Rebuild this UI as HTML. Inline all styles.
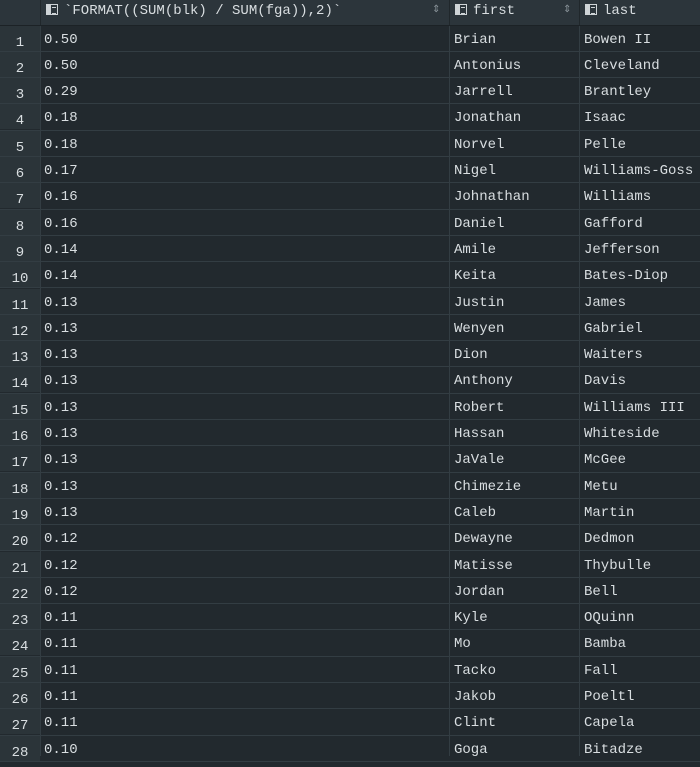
<!DOCTYPE html><html><head><style>
body{margin:0;width:700px;height:756px;overflow:hidden;background:#22292e;font-family:"Liberation Mono",monospace;font-size:14px;color:#d9dee1}
.h{position:absolute;top:0;left:0;width:700px;height:25px;background:#2c353b;border-bottom:1px solid #1c2226}
.h div{position:absolute;top:0;height:25px;line-height:22px;border-left:1px solid #20272b}
.ic{display:inline-block;width:12px;height:11px;vertical-align:-1px;margin-right:6px;background:linear-gradient(90deg,#cfd4d7 0 4px,transparent 4px);border:1px solid #cfd4d7;box-sizing:border-box;position:relative}
.ic:after{content:"";position:absolute;left:5px;right:1px;top:2px;height:5px;border-top:1px solid #cfd4d7;border-bottom:1px solid #cfd4d7}
.s{position:absolute;top:0;color:#8a949a;font-size:10px}
.r{position:absolute;left:0;width:700px;height:26.3px;border-bottom:1px solid #333d43;box-sizing:border-box;line-height:28px}
.r span{position:absolute;top:0}
.n{left:0;width:40px;height:25px;background:#2b3439;text-align:center;padding-top:3px;box-sizing:border-box}
.a{left:44px}.b{left:454px}.c{left:584px}
.v1,.v2,.v3{position:absolute;top:0;width:1px;height:756px;background:#333d43}
</style></head><body>
<div class="v1" style="left:40px"></div><div class="v2" style="left:449px"></div><div class="v3" style="left:579px"></div>
<div id="rows"></div>
<div class="h">
<div style="left:40px;width:409px;padding-left:5px;box-sizing:border-box"><span class="ic"></span>`FORMAT((SUM(blk) / SUM(fga)),2)`<span class="s" style="left:391px">⇕</span></div>
<div style="left:449px;width:130px;padding-left:5px;box-sizing:border-box"><span class="ic"></span>first<span class="s" style="left:113px">⇕</span></div>
<div style="left:579px;width:121px;padding-left:5px;box-sizing:border-box"><span class="ic"></span>last</div>
</div>
<script>
var d=[["0.50","Brian","Bowen II"],["0.50","Antonius","Cleveland"],["0.29","Jarrell","Brantley"],["0.18","Jonathan","Isaac"],["0.18","Norvel","Pelle"],["0.17","Nigel","Williams-Goss"],["0.16","Johnathan","Williams"],["0.16","Daniel","Gafford"],["0.14","Amile","Jefferson"],["0.14","Keita","Bates-Diop"],["0.13","Justin","James"],["0.13","Wenyen","Gabriel"],["0.13","Dion","Waiters"],["0.13","Anthony","Davis"],["0.13","Robert","Williams III"],["0.13","Hassan","Whiteside"],["0.13","JaVale","McGee"],["0.13","Chimezie","Metu"],["0.13","Caleb","Martin"],["0.12","Dewayne","Dedmon"],["0.12","Matisse","Thybulle"],["0.12","Jordan","Bell"],["0.11","Kyle","OQuinn"],["0.11","Mo","Bamba"],["0.11","Tacko","Fall"],["0.11","Jakob","Poeltl"],["0.11","Clint","Capela"],["0.10","Goga","Bitadze"]];
var h="";d.forEach(function(r,i){h+='<div class="r" style="top:'+(25.5+i*26.3)+'px"><span class="n">'+(i+1)+'</span><span class="a">'+r[0]+'</span><span class="b">'+r[1]+'</span><span class="c">'+r[2]+'</span></div>'});
document.getElementById("rows").innerHTML=h;
</script>
</body></html>
